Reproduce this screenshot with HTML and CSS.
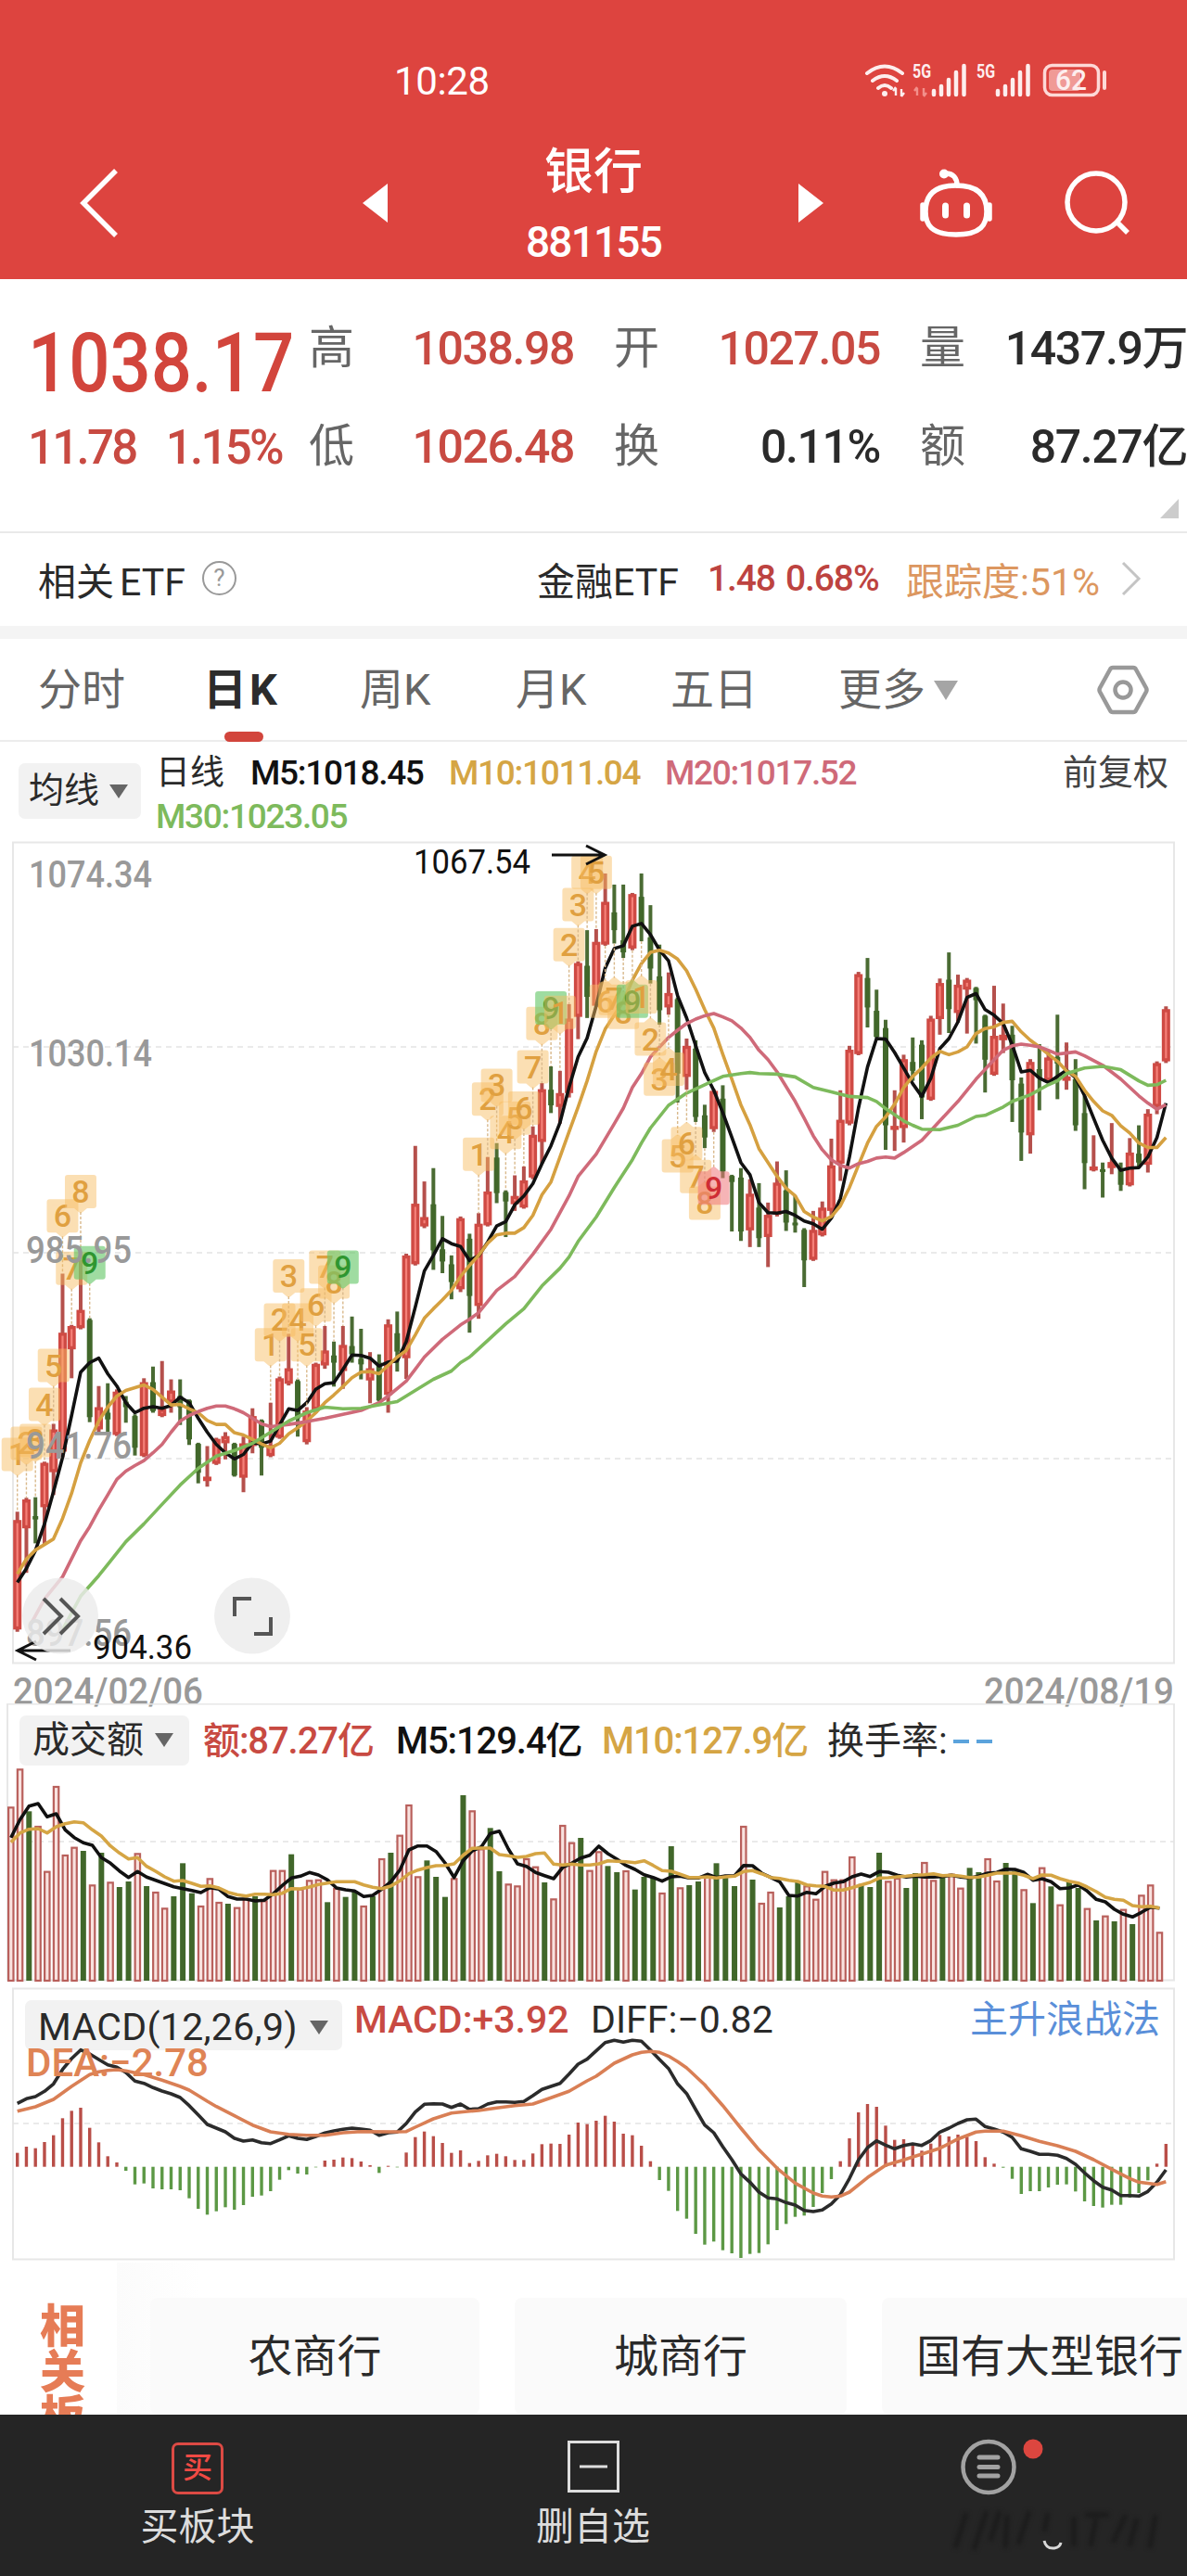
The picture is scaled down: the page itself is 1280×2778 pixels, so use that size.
FILE: index.html
```html
<!DOCTYPE html>
<html lang="zh-CN">
  <head>
    <meta charset="UTF-8" />
    <meta name="viewport" content="width=device-width, initial-scale=1.0" />
    <title>银行 881155</title>
    <link rel="stylesheet" href="styles.css">
  </head>
  <body>
    <header class="topbar">
      <div class="status">
        <span class="time">10:28</span>
        <svg class="status-icons" width="264" height="40" viewBox="932 66 264 40">
          <g fill="none" stroke="#fdeeee" stroke-width="4" stroke-linecap="round">
            <path d="M935 79q19-15 38 0M941 87q13-10 26 0M947 95q7-6 14 0" />
          </g>
          <circle cx="954" cy="101" r="3" fill="#fdeeee" />
          <path d="M966 103v-8M972 96v8M963 98l3-4M975 100l-3 4" stroke="#fdeeee" stroke-width="2.4" />
          <text x="984" y="84" textLength="20" lengthAdjust="spacingAndGlyphs">5G</text>
          <path d="M989 103v-8M996 95v8M986 98l3-4M999 100l-3 4" stroke="#f2908b" stroke-width="2.4" />
          <path class="sig" d="M1007 102v-4M1015 102v-9M1023 102v-16M1031 102v-24M1039.500 102v-31" />
          <text x="1053" y="84" textLength="20" lengthAdjust="spacingAndGlyphs">5G</text>
          <path class="sig" d="M1076 102v-4M1084 102v-9M1092 102v-16M1100 102v-24M1108.500 102v-31" />
          <rect x="1126.500" y="70.500" width="58" height="32" rx="8" fill="none" stroke="#fdd9d7" stroke-width="3.500" />
          <rect x="1131" y="75" width="34" height="23" rx="4" fill="#f09a96" />
          <path d="M1191 78v17" stroke="#fdd9d7" stroke-width="4" stroke-linecap="round" />
          <text class="bat" x="1138" y="97" textLength="34" lengthAdjust="spacingAndGlyphs">62</text>
        </svg>
      </div>
      <nav class="nav">
        <svg width="44" height="76" viewBox="0 0 44 76"><path d="M39 3L4 38l35 35" fill="none" stroke="#fff" stroke-width="5.500" /></svg>
        <svg width="27" height="42" viewBox="0 0 27 42"><path d="M27 0v42L0 21z" fill="#fff" /></svg>
        <div class="title">
          <h1>银行</h1>
          <span>881155</span>
        </div>
        <svg class="end" width="27" height="42" viewBox="0 0 27 42"><path d="M0 0v42l27-21z" fill="#fff" /></svg>
        <svg class="end" width="80" height="74" viewBox="0 0 80 74">
          <g fill="none" stroke="#fff" stroke-width="5.500">
            <path d="M40 18c27 0 33 14 33 28s-6 25-33 25S7 60 7 46s6-28 33-28z" />
            <path d="M41 18c0-8-4-13-12-13" stroke-linecap="round" />
            <path d="M4 39v15M76 39v15" stroke-linecap="round" />
            <path d="M28.500 40v10M51.500 40v10" stroke-width="7" stroke-linecap="round" />
          </g>
          <circle cx="27" cy="5.500" r="5" fill="#fff" />
        </svg>
        <svg class="end" width="70" height="70" viewBox="0 0 70 70">
          <circle cx="34" cy="34" r="31" fill="none" stroke="#fff" stroke-width="5.500" />
          <path d="M56 55l12 12" stroke="#fff" stroke-width="5.500" />
        </svg>
      </nav>
    </header>

    <section class="quote">
      <div class="last">
        <div class="price">1038.17</div>
        <div class="change"><span>11.78</span><span>1.15%</span></div>
      </div>
      <div class="stats">
        <span class="k">高</span><span class="v up">1038.98</span>
        <span class="k">开</span><span class="v up">1027.05</span>
        <span class="k">量</span><span class="v">1437.9万</span>
        <span class="k">低</span><span class="v up">1026.48</span>
        <span class="k">换</span><span class="v">0.11%</span>
        <span class="k">额</span><span class="v">87.27亿</span>
      </div>
      <i class="corner"></i>
    </section>

    <section class="etf">
      <span class="etf-label">相关<b>ETF</b></span>
      <span class="help">?</span>
      <span class="etf-name">金融ETF</span>
      <span class="etf-num">1.48</span>
      <span class="etf-num">0.68%</span>
      <span class="track">跟踪度:51%</span>
      <svg width="22" height="38" viewBox="0 0 22 38"><path d="M2 2l17 17L2 36" fill="none" stroke="#c4c4c4" stroke-width="3" /></svg>
    </section>

    <nav class="tabs">
      <span>分时</span>
      <span class="active">日K</span>
      <span>周K</span>
      <span>月K</span>
      <span>五日</span>
      <span>更多<i class="caret"></i></span>
      <svg width="58" height="54" viewBox="0 0 58 54">
        <path d="M18 3h22q2 0 3 2l11 20q1 2 0 4L43 49q-1 2-3 2H18q-2 0-3-2L4 29q-1-2 0-4L15 5q1-2 3-2z" fill="none" stroke="#999" stroke-width="4.500" />
        <circle cx="29" cy="27" r="8.500" fill="none" stroke="#999" stroke-width="4.500" />
      </svg>
    </nav>

    <section class="ma-row">
      <span class="pick pick-ma">均线<i class="caret"></i></span>
      <div class="ma-list">
        <span class="kind">日线</span>
        <span class="m5">M5:1018.45</span>
        <span class="m10">M10:1011.04</span>
        <span class="m20">M20:1017.52</span>
        <span class="m30">M30:1023.05</span>
      </div>
      <span class="adjust">前复权</span>
    </section>

    <svg class="kline" id="kline" viewBox="0 900 1280 937">
      <g class="frame">
        <path d="M14 908.500H1266V1793.500H14z" />
        <path class="grid" d="M14 1129H1266M14 1351H1266M14 1573H1266" />
      </g>
      <g id="candles"></g>
      <g id="maLines"></g>
      <g id="marks"></g>
      <g class="axis">
        <text x="31" y="957" textLength="133" lengthAdjust="spacingAndGlyphs">1074.34</text>
        <text x="31" y="1150" textLength="133" lengthAdjust="spacingAndGlyphs">1030.14</text>
        <text x="28" y="1361.500" textLength="114" lengthAdjust="spacingAndGlyphs">985.95</text>
        <text x="28" y="1573" textLength="114" lengthAdjust="spacingAndGlyphs">941.76</text>
        <text x="28" y="1775" textLength="114" lengthAdjust="spacingAndGlyphs">897.56</text>
        <text x="14" y="1838" textLength="205" lengthAdjust="spacingAndGlyphs">2024/02/06</text>
        <text x="1061" y="1838" textLength="205" lengthAdjust="spacingAndGlyphs">2024/08/19</text>
      </g>
      <g class="extreme">
        <text x="446" y="942" textLength="126" lengthAdjust="spacingAndGlyphs">1067.54</text>
        <path d="M595 922H652M632 912L652 922 632 932" />
        <text x="100" y="1789" textLength="107" lengthAdjust="spacingAndGlyphs">904.36</text>
        <path d="M76 1780H19M39 1770L19 1780 39 1790" />
      </g>
      <g class="round-btn">
        <circle cx="65" cy="1742.500" r="41" />
        <path d="M47 1724l19 19-19 19M65 1724l19 19-19 19" />
        <circle cx="272" cy="1742.500" r="41" />
        <path d="M271 1724h-18v19M274 1762h18v-18" />
      </g>
    </svg>

    <section class="panel volume">
      <svg viewBox="0 1837 1280 303">
        <g class="frame">
          <path d="M8 1837.500H1266V2135.500H8z" />
          <path class="grid" d="M8 1986H1266" />
        </g>
        <g id="volBars"></g>
        <g id="volLines"></g>
      </svg>
      <div class="legend">
        <span class="pick">成交额<i class="caret"></i></span>
        <span class="up">额:87.27亿</span>
        <span class="m5">M5:129.4亿</span>
        <span class="m10">M10:127.9亿</span>
        <span class="rate">换手率:</span>
        <span class="dash"><i></i><i></i></span>
      </div>
    </section>

    <section class="panel macd">
      <svg viewBox="0 2140 1280 300">
        <g class="frame">
          <path d="M14 2144.500H1266V2436.500H14z" />
          <path class="grid" d="M14 2290H1266" />
        </g>
        <rect class="pick-bg" x="27" y="2157" width="342" height="54" rx="7" />
        <g id="macdBars"></g>
        <g id="macdLines"></g>
      </svg>
      <div class="legend">
        <span class="pick">MACD(12,26,9)<i class="caret"></i></span>
        <span class="up">MACD:+3.92</span>
        <span class="diff">DIFF:−0.82</span>
        <a class="tactic">主升浪战法</a>
      </div>
      <div class="dea">DEA:−2.78</div>
    </section>

    <section class="related">
      <div class="related-title">相关板</div>
      <div class="cards">
        <span>农商行</span>
        <span>城商行</span>
        <span>国有大型银行</span>
      </div>
    </section>

    <footer class="bottom">
      <div class="item">
        <span class="buy">买</span>
        <span>买板块</span>
      </div>
      <div class="item">
        <svg width="56" height="56" viewBox="0 0 56 56"><path d="M1.500 1.500h53v53h-53zM13 28h30" fill="none" stroke="#dedede" stroke-width="3" /></svg>
        <span>删自选</span>
      </div>
      <div class="item more">
        <svg width="280" height="130" viewBox="1000 2625 280 130">
          <circle cx="1066" cy="2660.500" r="27.500" fill="none" stroke="#a2a2a2" stroke-width="4.500" />
          <path d="M1056 2650h20M1056 2660.500h20M1056 2670h20" stroke="#a2a2a2" stroke-width="5" stroke-linecap="round" />
          <circle cx="1114" cy="2641" r="10.500" fill="#dc463f" />
          <g class="smudge">
            <path d="M1030 2748l12-38M1050 2750l14-42M1068 2740l10-32M1084 2748l2-36M1098 2744l12-36M1126 2730l4-20M1158 2746v-32M1170 2712h26M1176 2746l6-30M1200 2742l14-30M1218 2746l8-30M1240 2748l6-36" />
          </g>
          <path d="M1126 2740q2 9 11 8 6-1 7-6" fill="none" stroke="#d8d8d8" stroke-width="3" />
        </svg>
      </div>
    </footer>
    <script src="chart.js"></script>
  </body>
</html>
```
FILE: styles.css
```css
* {
  box-sizing: border-box;
}
body {
  margin: 0;
  width: 1280px;
  background: #fff;
  color: #2a2a2a;
  font-family: Roboto, "Noto Sans CJK SC", sans-serif;
  overflow-x: hidden;
}
svg {
  display: block;
}
i {
  font-style: normal;
}
.up {
  color: #c84a42;
}
.m5 {
  color: #111;
}
.m10 {
  color: #d5a544;
}
.m20 {
  color: #cf6a79;
}
.m30 {
  color: #7dba5c;
}

/* header */
.topbar {
  height: 301px;
  background: #dd443f;
  color: #fff;
}
.status {
  height: 120px;
  padding: 66px 84px 0 425px;
  display: flex;
  justify-content: space-between;
}
.time {
  font-size: 42px;
  line-height: 43px;
  letter-spacing: -0.4px;
}
.status-icons text {
  fill: #fdeeee;
  font-size: 20px;
  font-weight: 700;
}
.status-icons .bat {
  font-size: 31px;
  font-weight: 500;
}
.sig {
  stroke: #fdeeee;
  stroke-width: 4.5;
  stroke-linecap: round;
}
.nav {
  height: 181px;
  padding: 17px 62px 0 86px;
  display: grid;
  grid-template-columns: 305px 150px 198px 149px 183px 147px;
  align-items: center;
}
.nav .end {
  justify-self: end;
}
.title {
  text-align: center;
  margin-top: 8px;
}
.title h1 {
  margin: 0;
  font-size: 53px;
  line-height: 76px;
  font-weight: 500;
}
.title span {
  display: block;
  font-size: 46px;
  line-height: 74px;
  letter-spacing: -1.8px;
  font-weight: 500;
}

/* quote */
.quote {
  position: relative;
  height: 274px;
  padding-top: 22px;
  display: flex;
  border-bottom: 2px solid #e9e9e9;
}
.last {
  width: 333px;
  padding: 19px 0 0 30px;
  white-space: nowrap;
  color: #d2453c;
}
.price {
  font-size: 89px;
  line-height: 100px;
  font-weight: 500;
  transform: scaleX(0.875);
  transform-origin: 0 50%;
}
.change {
  display: flex;
  gap: 32px;
  font-size: 51px;
  line-height: 82px;
  font-weight: 500;
  letter-spacing: -2.7px;
  color: #c84a42;
}
.stats {
  display: grid;
  grid-template-columns: 48px 238px 92px 238px 92px 239px;
  grid-auto-rows: 106px;
  line-height: 106px;
  font-size: 50px;
}
.stats .k {
  font-size: 49px;
  color: #666;
  text-align: right;
}
.stats .v {
  text-align: right;
  white-space: nowrap;
  font-weight: 500;
  letter-spacing: -1.4px;
}
.corner {
  position: absolute;
  right: 9px;
  bottom: 14px;
  border-left: 20px solid transparent;
  border-bottom: 21px solid #ccc;
}

/* related etf */
.etf {
  height: 114px;
  padding: 0 0 3px 41px;
  border-bottom: 14px solid #f4f4f4;
  display: grid;
  grid-template-columns: 177px 361px 184px 84px 130px 232px 22px;
  align-items: center;
  font-size: 41px;
  white-space: nowrap;
}
.etf-label b {
  font-weight: 400;
  margin-left: 6px;
}
.help {
  width: 37px;
  height: 37px;
  border: 2px solid #999;
  border-radius: 50%;
  color: #999;
  font-size: 26px;
  line-height: 33px;
  text-align: center;
}
.etf-num {
  font-size: 39px;
  font-weight: 500;
  letter-spacing: -1.1px;
  color: #bd4340;
}
.track {
  color: #dc9760;
}

/* period tabs */
.tabs {
  height: 111px;
  padding-left: 41px;
  border-bottom: 2px solid #ececec;
  display: grid;
  grid-template-columns: 182px 165px 168px 167px 181px 278px 60px;
  align-items: center;
  font-size: 47px;
  color: #666;
}
.tabs span {
  position: relative;
  line-height: 70px;
  white-space: nowrap;
}
.tabs .active {
  margin-left: -4px;
  font-weight: 700;
  letter-spacing: 3px;
  color: #2c2c2c;
}
.tabs .active::after {
  content: "";
  position: absolute;
  left: 23px;
  top: 80px;
  width: 42px;
  height: 11px;
  border-radius: 6px;
  background: #d2453c;
}
.caret {
  display: inline-block;
  border: 10px solid transparent;
  border-top: 15px solid #666;
  border-bottom: 0;
  margin-left: 12px;
  vertical-align: middle;
}
.tabs .caret {
  border-width: 21px 13px 0;
  border-top-color: #a5a5a5;
  margin: -6px 0 0 9px;
}

/* moving averages */
.ma-row {
  height: 100px;
  padding: 10px 20px 0;
  display: flex;
  white-space: nowrap;
}
.pick {
  background: #f2f2f2;
  border-radius: 7px;
}
.pick-ma {
  width: 132px;
  height: 60px;
  margin-top: 13px;
  padding-left: 11px;
  font-size: 38px;
  line-height: 59px;
}
.pick-ma .caret {
  margin: -3px 0 0 11px;
}
.ma-list {
  flex: 1;
  margin-left: 16px;
  display: grid;
  grid-template-columns: 102px 214px 233px 1fr;
  grid-auto-rows: 47px;
  line-height: 47px;
  font-size: 37px;
  font-weight: 500;
  letter-spacing: -1.3px;
}
.ma-list .m30 {
  grid-column: 1 / 4;
}
.kind {
  font-weight: 400;
  letter-spacing: 0;
}
.adjust {
  font-size: 38px;
  line-height: 47px;
  color: #444;
}

/* charts */
.kline {
  overflow: visible;
}
.frame path {
  fill: none;
  stroke: #e7e7e7;
  stroke-width: 2;
}
.frame .grid {
  stroke: #e4e4e4;
  stroke-width: 1.5;
  stroke-dasharray: 6 5;
}
.rise {
  fill: #f58078;
  stroke: #cf4a44;
  stroke-width: 3.4;
}
.fall {
  fill: #41672a;
}
.wick-rise {
  stroke: #b5504c;
  stroke-width: 4;
}
.wick-fall {
  stroke: #4a6b33;
  stroke-width: 4;
}
.line {
  fill: none;
  stroke-width: 3.6;
  stroke-linejoin: round;
}
.axis text {
  font-size: 41px;
  font-weight: 500;
  fill: #999;
}
.extreme text {
  font-size: 36px;
  fill: #111;
}
.extreme path {
  fill: none;
  stroke: #111;
  stroke-width: 3;
}
.round-btn circle {
  fill: #ececec;
  opacity: 0.82;
}
.round-btn path {
  fill: none;
  stroke: #555;
  stroke-width: 4;
}
.tag {
  fill: #f8bd62;
  stroke: #f8bd62;
  stroke-width: 6;
  opacity: 0.48;
}
.tag.green {
  fill: #66c869;
  stroke: #66c869;
  opacity: 0.62;
}
.tag.red {
  fill: #f0787c;
  stroke: #f0787c;
  opacity: 0.55;
}
.tag-text {
  font-size: 34px;
  font-weight: 500;
  text-anchor: middle;
  fill: #e0a040;
}
.tag-text.green {
  fill: #2f9630;
}
.tag-text.red {
  fill: #cf2d35;
}
.lead {
  stroke: #d9b98c;
  stroke-width: 1.4;
  stroke-dasharray: 3 2;
}
.vol-rise {
  fill: #f9e2df;
  stroke: #b9605c;
  stroke-width: 2.2;
}
.panel {
  position: relative;
}
.panel svg {
  position: absolute;
  inset: 0;
}
.volume {
  height: 303px;
}
.macd {
  height: 300px;
}
.legend {
  position: relative;
  display: grid;
  white-space: nowrap;
}
.volume .legend {
  padding: 14px 0 0 21px;
  grid-template-columns: 198px 208px 222px 243px 136px 60px;
  font-size: 40px;
  font-weight: 500;
  line-height: 54px;
  letter-spacing: -1.1px;
}
.volume .pick {
  width: 183px;
  height: 54px;
  margin-top: -1px;
  padding-left: 14px;
  font-weight: 400;
  letter-spacing: 0;
}
.volume .caret {
  margin: -5px 0 0 12px;
}
.rate {
  font-weight: 400;
  letter-spacing: 0;
}
.dash {
  display: flex;
  gap: 8px;
  align-items: center;
}
.dash i {
  width: 17px;
  height: 4px;
  background: #5ba3dc;
}
.macd .legend {
  padding: 11px 29px 0 27px;
  grid-template-columns: 355px 255px 1fr auto;
  font-size: 41px;
  line-height: 54px;
}
.macd .pick {
  width: 342px;
  margin-top: 8px;
  padding-left: 14px;
  background: none;
  letter-spacing: 0.3px;
}
.macd .caret {
  margin: -6px 0 0 13px;
}
.macd .legend .up {
  font-weight: 500;
}
.pick-bg {
  fill: #f2f2f2;
}
.tactic {
  font-size: 41px;
  color: #5a8fd9;
}
.dea {
  position: relative;
  margin: -15px 0 0 28px;
  font-size: 42px;
  font-weight: 500;
  line-height: 54px;
  color: #df8455;
}

/* related boards */
.related {
  height: 164px;
  overflow: hidden;
  display: flex;
  align-items: flex-start;
}
.related-title {
  flex: none;
  width: 126px;
  height: 260px;
  padding: 43px 0 0 38px;
  writing-mode: vertical-lr;
  white-space: nowrap;
  line-height: 48px;
  font-size: 49px;
  font-weight: 900;
  color: #e67c56;
}
.cards {
  flex: none;
  padding: 38px 0 0 36px;
  display: grid;
  grid-template-columns: 355px 358px 370px;
  gap: 38px;
  background: linear-gradient(90deg, #fbfbfb, #fff 90px);
}
.cards span {
  height: 126px;
  background: #fafafa;
  border-radius: 8px;
  text-align: center;
  font-size: 48px;
  line-height: 128px;
  white-space: nowrap;
}
.cards span:last-child {
  text-align: left;
  padding-left: 37px;
}

/* bottom bar */
.bottom {
  height: 174px;
  background: #252525;
  color: #dcdcdc;
  display: grid;
  grid-template-columns: 426px 427px 427px;
}
.item {
  padding-top: 28px;
  display: flex;
  flex-direction: column;
  align-items: center;
  font-size: 41px;
  line-height: 60px;
  gap: 7px;
}
.buy {
  width: 56px;
  height: 56px;
  margin-top: 2px;
  border: 3px solid #dc4a44;
  border-radius: 7px;
  color: #f04a44;
  font-size: 32px;
  line-height: 48px;
  font-weight: 500;
  text-align: center;
}
.buy + span {
  margin-top: -2px;
}
.item.more {
  padding: 21px 0 0;
  align-items: flex-end;
}
.smudge {
  fill: none;
  stroke: #1b1b1b;
  stroke-width: 5;
  filter: blur(2px);
}
```
FILE: chart.js
```js
const NS = "http://www.w3.org/2000/svg";
const STEP = 9.753;
const X0 = 18.7;
const cx = (i) => X0 + i * STEP;

function add(parent, name, attrs, text) {
  const el = document.createElementNS(NS, name);
  for (const k in attrs) el.setAttribute(k, attrs[k]);
  if (text !== undefined) el.textContent = text;
  parent.appendChild(el);
  return el;
}

// points: "index:value index:value ..."
function drawLine(id, data, x, y, color) {
  const pts = data.trim().split(/\s+/).map((p) => {
    const [i, v] = p.split(":").map(Number);
    return x(i).toFixed(1) + "," + y(v).toFixed(1);
  });
  add(document.getElementById(id), "polyline", { class: "line", points: pts.join(" "), stroke: color });
}
const seq = (s) => s.trim().split(/\s+/).map((v, i) => i + ":" + v).join(" ");

// --- K LINE: high, body top, body bottom, low, direction ---
const candles = `1218,1233,1430,1434,r 1193,1196,1248,1328,r 1192,1226,1232,1275,g 1128,1130,1210,1278,r
1060,1070,1147,1188,r 790,896,1110,1120,r 882,884,926,978,r 765,855,888,890,r 870,873,1048,1057,g
992,1030,1070,1078,r 987,1040,1052,1078,g 998,1002,1080,1082,r 1010,1020,1030,1058,g 1043,1046,1103,1117,g
978,985,1118,1120,r 957,985,1037,1040,g 947,1033,1046,1048,r 980,1000,1022,1040,r 980,1010,1030,1062,g
1016,1018,1088,1098,g 1094,1096,1148,1167,g 1100,1155,1163,1173,r 1085,1087,1132,1134,r 1075,1082,1095,1124,r
1094,1096,1153,1155,g 1083,1095,1157,1183,r 1032,1046,1100,1113,r 1052,1054,1103,1153,g 1022,1098,1118,1120,r
975,978,1085,1087,r 898,960,988,991,r 980,983,1050,1083,g 1030,1036,1093,1097,r 950,952,1035,1040,r
884,928,955,961,r 912,937,950,993,g 884,918,965,997,r 867,920,935,950,g 889,943,953,980,g
931,960,982,1023,r 935,950,1018,1020,g 872,881,1008,1040,r 858,897,930,966,g 754,757,942,979,r
560,664,773,775,r 624,688,705,708,r 600,665,748,783,g 686,746,768,789,g 757,773,805,836,g
687,690,818,823,r 718,727,830,896,g 681,700,848,871,r 580,642,703,705,r 555,581,645,663,g
640,643,660,724,g 613,650,665,677,r 597,622,671,673,r 525,540,617,620,r 447,458,553,592,r
417,459,487,501,g 425,465,490,520,r 305,331,465,473,r 228,231,328,368,r 172,236,292,330,g
170,193,308,310,r 70,121,198,200,r 90,140,172,196,g 90,190,212,222,g 105,107,205,208,r
70,112,165,192,g 127,185,241,268,g 198,255,316,342,g 248,285,311,324,r 293,296,430,482,g
367,380,436,459,r 370,385,508,517,g 486,505,545,564,g 458,461,530,535,r 451,475,606,618,g
612,614,625,714,g 600,617,714,731,g 620,646,712,742,r 627,671,726,742,g 662,684,724,778,r
588,626,684,687,r 604,640,698,713,g 650,698,703,716,g 708,711,766,814,g 677,711,765,767,r
660,671,721,723,r 547,595,677,685,r 460,513,592,623,r 380,387,520,523,r 247,251,395,397,r
222,258,311,347,g 279,317,364,366,g 333,348,523,567,g 460,524,531,569,r 396,404,528,554,r
365,409,425,443,g 370,378,473,512,g 326,331,477,479,r 259,267,332,360,r 212,261,314,357,g
252,270,321,338,r 258,261,279,358,r 274,276,298,376,g 324,326,405,464,g 272,362,432,434,r
304,360,370,393,r 344,360,442,517,g 437,448,536,587,g 404,409,541,574,r 377,422,438,496,g
390,401,443,447,r 324,400,412,476,g 374,435,443,459,r 404,440,523,533,g 470,501,591,638,g
541,597,603,606,r 590,602,607,653,g 519,589,600,611,r 590,600,630,641,g 546,572,631,633,r
523,574,590,600,g 494,502,594,608,r 408,411,490,503,r 309,314,408,411,r`.split(/\s+/).map((c) => c.split(","));

const ky = (v) => 900 + v / 1.668;
const candleBox = document.getElementById("candles");
candles.forEach(([h, t, b, l, d], i) => {
  const x = cx(i);
  const top = ky(+t);
  const bottom = ky(+b);
  const up = d === "r";
  add(candleBox, "path", { class: up ? "wick-rise" : "wick-fall", d: `M${x} ${ky(+h)}V${ky(+l)}` });
  if (up) {
    add(candleBox, "rect", { class: "rise", x: x - 2.8, y: top + 1.7, width: 5.6, height: Math.max(bottom - top - 3.4, 1) });
  } else {
    add(candleBox, "rect", { class: "fall", x: x - 3, y: top, width: 6, height: Math.max(bottom - top, 3) });
  }
});

const ma30 = `5:1430 7:1370 9:1333 10:1313 12:1272 14:1240 16:1205 18:1170 20:1140 22:1118 24:1108 26:1095 28:1075 30:1055
32:1040 34:1030 36:1033 38:1032 40:1026 42:1020 44:1000 46:980 48:965 49:950 50:940 52:910 54:880 56:853 58:812 60:780
61:760 62:732 64:688 66:635 68:585 69:555 70:528 72:487 74:465 76:450 78:435 80:430 81:428 82:430 84:431 86:436 88:455
90:463 92:471 94:473 95:480 96:493 98:515 99:523 100:530 102:531 104:523 106:507 107:505 109:490 110:480 112:468
114:450 115:443 116:430 118:420 120:417 122:423 124:443 125:451 126:450 127:442`;
const ma20 = `1.5:1420 3:1375 5:1335 7:1270 8:1245 9:1215 10:1188 11:1160 12:1145 13:1135 14:1126 15:1112 16:1097 17:1075
18:1055 19:1045 20:1038 21:1032 22:1028 23:1028 24:1033 25:1040 26:1050 27:1060 28:1065 30:1061 32:1056 34:1050 36:1043
38:1036 40:1022 41:1010 43:983 44:962 45:940 47:908 49:882 50:872 51:860 53:820 55:795 57:755 59:710 61:650 62:615
64:575 66:520 67:492 68:455 69:430 70:400 72:365 73:352 74:340 75:332 76:326 77:322 78:328 79:335 80:348 81:365 82:388
83:405 84:427 86:480 87:510 88:542 89:567 90:585 91:595 92:600 93:592 94:588 95:582 96:580 97:582 98:572 100:550 102:515
104:480 106:440 108:405 109:388 110:380 111:377 112:379 113:382 114:388 115:395 116:393 117:391 118:398 120:415 122:440
124:470 125:483 126:494 127:486`;
const ma10 = seq(`1330 1303 1287 1277 1267 1230 1185 1130 1090 1055 1030 1010 1000 995 990 998 1012 1026 1025 1033 1040 1054
1061 1061 1076 1080 1088 1096 1103 1095 1078 1067 1055 1040 1022 1008 993 977 967 966 970 955 940 928 900 870 853 837 820
795 775 757 735 720 717 717 707 685 648 625 580 535 490 443 390 350 325 300 262 232 212 208 213 224 245 278 315 348 395
440 486 522 565 590 615 636 650 678 688 695 687 668 635 595 555 525 508 485 455 435 420 402 390 396 391 382 358 349 346
338 336 355 370 382 395 408 425 435 460 480 497 505 524 537 555 563 563 545`);
const ma5 = seq(`1345 1320 1288 1240 1182 1120 1045 967 950 942 970 992 1022 1040 1032 1029 1032 1027 1012 1022 1050 1075
1097 1112 1123 1115 1094 1096 1091 1062 1033 1036 1022 998 988 986 962 936 937 942 956 949 947 912 850 785 757 727 736
741 766 758 733 704 696 666 650 628 592 560 518 455 400 366 308 240 205 200 165 160 180 208 227 290 330 380 428 460 500
545 590 612 662 680 681 678 685 695 700 710 690 655 580 492 418 367 368 392 420 448 471 438 385 367 337 293 286 315 325
340 378 427 424 438 446 435 424 437 470 510 550 582 604 600 599 580 545 483`);
drawLine("maLines", ma5, cx, ky, "#111");
drawLine("maLines", ma10, cx, ky, "#d5a040");
drawLine("maLines", ma20, cx, ky, "#cf6a79");
drawLine("maLines", ma30, cx, ky, "#7dba5c");

// --- NINE TURN MARKS: index, number, center ---
const marks = `0,1,1115 1,2,1095 2,3,1090 3,4,1025 4,5,955 5,6,686 6,7,780 7,8,642 8,9,770,green
28,1,918 29,2,873 30,3,794 31,4,873 32,5,918 33,6,846 34,7,778 35,8,805 36,9,778,green
51,1,575 52,2,476 53,3,451 54,4,536 55,5,510 56,6,492 57,7,418 58,8,340 59,9,312,green
60,1,320 61,2,198 62,3,126 63,4,68 64,5,68
65,6,300 66,7,295 67,8,320 68,9,300,green 69,1,292 70,2,368 71,3,440 72,4,422
73,5,578 74,6,556 75,7,615 76,8,663 77,9,636,red`.split(/\s+/).map((m) => m.split(","));
const markBox = document.getElementById("marks");
marks.forEach(([i, n, v, color]) => {
  const x = cx(+i);
  const y = ky(+v);
  const c = candles[i];
  const below = +i >= 65;
  const from = below ? ky(+c[3]) : y + 22;
  const to = below ? y - 22 : ky(+c[0]);
  if (to > from) add(markBox, "path", { class: "lead", d: `M${x} ${from}V${to}` });
  // small tip points to the candle
  const s = below ? -1 : 1;
  add(markBox, "path", {
    class: "tag " + (color || ""),
    d: `M${x - 14} ${y - 15 * s}H${x + 14}V${y + 15 * s}H${x + 6}L${x} ${y + 20 * s}L${x - 6} ${y + 15 * s}H${x - 14}Z`,
    "stroke-linejoin": "round",
  });
  add(markBox, "text", { class: "tag-text " + (color || ""), x, y: y + 12 }, n);
});

// --- VOLUME ---
const vols = `475r 352r 490g 537r 683r 408r 630r 605r 618g 727r 624g 718r 735g 717g 625r 732g 750r 802r 765g 658g 755g 795r
706r 783r 789g 800r 772r 765g 778r 680r 680r 629g 740r 712r 710r 784g 738r 767g 748g 795r 765g 642r 624g 566r 468r 700r
649g 702g 767g 706r 438g 487r 610r 544g 684g 724r 730r 642r 668r 720g 772r 534r 590r 576g 680r 619r 667g 687g 681r 743g
702g 705g 753r 603g 736r 729g 717g 695r 658g 700g 732g 537r 711g 786r 750r 801g 765g 720g 730r 773r 683r 710r 710r 636r
725g 735g 624g 715r 705r 738g 690g 654r 712r 705g 692r 737r 673g 687g 642r 714r 657g 683g 742r 787g 671r 733g 791r 715g
738g 803r 843g 827r 846g 806r 855g 760r 727r 880r`.split(/\s+/);
const vx = (i) => 11.8 + i * STEP;
const vy = (v) => 1790 + v / 3;
const volBox = document.getElementById("volBars");
vols.forEach((s, i) => {
  const top = vy(parseInt(s, 10));
  if (s.endsWith("r")) {
    add(volBox, "rect", { class: "vol-rise", x: vx(i) - 2.7, y: top + 1, width: 5.4, height: 2135 - top });
  } else {
    add(volBox, "rect", { class: "fall", x: vx(i) - 3, y: top, width: 6, height: 2136 - top });
  }
});
drawLine("volLines", seq(`575 517 473 465 508 498 550 575 592 600 640 658 683 704 685 703 713 724 734 740 746 753 737 742 766
774 774 780 778 757 730 706 700 688 696 712 738 744 748 766 762 742 718 680 615 602 602 620 657 704 650 618 605 562 554
612 660 668 688 698 708 672 658 641 632 603 627 645 665 678 695 704 716 702 700 706 706 694 704 699 699 665 666 690 704
718 762 764 752 757 733 722 718 702 693 701 685 687 697 703 700 703 703 701 697 703 706 700 690 688 677 678 688 713 708
718 740 738 728 748 775 783 807 823 832 817 800 803`), vx, vy, "#111");
drawLine("volLines", seq(`590 560 548 546 560 540 530 524 527 550 570 602 625 644 640 668 684 702 716 714 723 733 731 738 752
760 764 758 758 760 755 740 741 735 727 722 718 718 718 728 736 740 732 715 692 680 672 666 665 660 632 610 609 609 630
634 639 636 627 625 661 664 661 664 664 660 650 652 653 656 650 665 682 684 694 704 704 702 706 702 700 685 682 692 704
707 713 717 728 731 733 745 745 737 728 720 706 705 702 700 697 695 692 698 697 700 704 703 697 690 690 690 697 708 696
697 708 716 722 735 750 768 775 778 795 799 797 803`), vx, vy, "#d5a544");

// --- MACD ---
const macd = `45 65 60 80 102 157 181 191 126 79 34 14 -13 -57 -54 -70 -73 -73 -76 -102 -136 -155 -144 -131 -139 -124 -97 -93
-79 -42 -11 -22 -25 -2 20 23 30 28 17 5 -20 3 -2 46 96 114 99 77 45 53 12 19 37 42 34 22 22 43 73 75 74 104 143 138 149
165 146 107 102 68 18 -43 -78 -143 -168 -217 -252 -242 -270 -280 -295 -282 -279 -251 -205 -185 -162 -158 -130 -85 -40 18
92 176 203 194 133 87 89 75 52 75 103 98 104 97 83 31 10 -3 -39 -88 -79 -79 -67 -58 -57 -80 -112 -127 -132 -123 -123
-100 -85 -44 10 74`.split(/\s+/).map(Number);
const my = (v) => 2140 + v / 3;
const macdBox = document.getElementById("macdBars");
macd.forEach((v, i) => {
  add(macdBox, "path", {
    d: `M${cx(i)} 2336.700V${my(590 - v)}`,
    stroke: v > 0 ? "#b94e48" : "#5c9845",
    "stroke-width": 3.4,
  });
});
drawLine("macdLines", seq(`385 370 363 346 322 275 240 212 225 243 260 268 285 313 320 334 345 354 366 392 422 453 465 477 498
507 503 512 515 503 490 498 502 492 481 474 469 465 468 472 488 480 478 450 413 388 386 387 398 387 404 402 387 380 380
382 379 360 340 330 320 290 258 242 215 188 181 187 181 184 212 243 272 322 353 405 455 480 525 567 613 640 672 691 694
706 714 731 735 730 710 680 628 568 528 506 520 532 521 516 521 505 478 465 450 438 436 460 468 478 495 532 540 550 550
553 563 582 610 635 656 665 683 683 685 670 640 600`), cx, my, "#2b2b2b");
drawLine("macdLines", `0:410 2:396 4:372 6:330 8:292 9:283 10:278 11:276 12:280 14:292 16:310 18:330 19:342 20:360 21:378
22:395 24:425 26:455 28:477 30:485 32:488 34:488 36:480 38:476 42:477 43:476 44:462 46:435 48:416 50:410 51:408 53:400
55:392 57:387 59:367 61:346 63:312 64:297 66:255 68:228 69:220 70:217 71:220 72:232 73:250 74:270 76:325 78:392 80:465
82:535 84:595 86:643 88:675 89:685 90:688 91:685 92:672 94:625 96:585 98:568 100:549 102:530 104:500 106:478 107:475
109:475 111:490 113:508 115:522 117:540 119:567 121:598 123:628 124:640 126:647 127:638`, cx, my, "#d97f55");
```
